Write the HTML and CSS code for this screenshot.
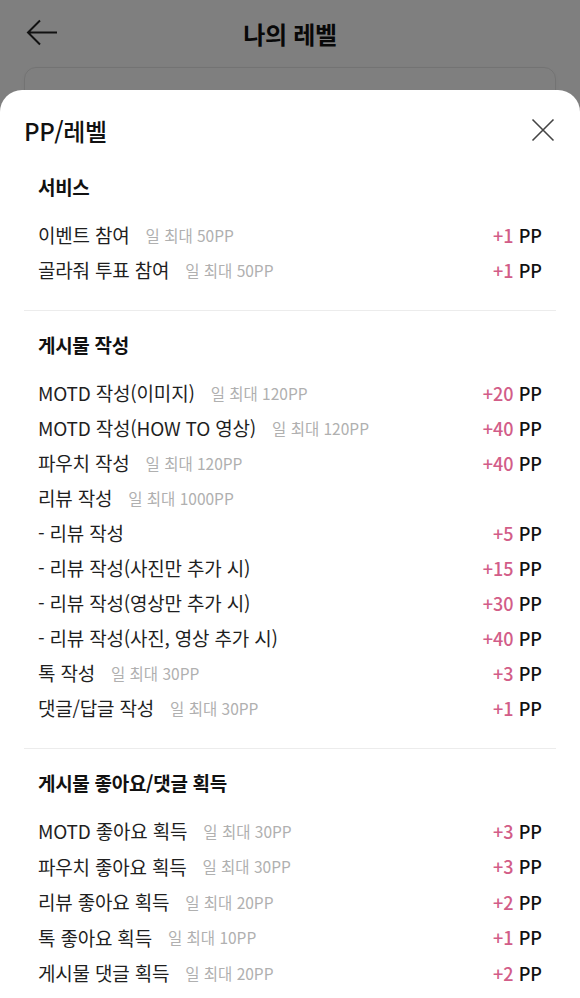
FILE: index.html
```html
<!DOCTYPE html>
<html lang="ko">

<head>
    <meta charset="UTF-8">
    <meta name="viewport" content="width=device-width, initial-scale=1.0">
    <title>나의 레벨</title>
    <link rel="stylesheet" href="styles.css">
</head>

<body>
    <div class="page">
        <header class="top-bar">
            <button class="back-btn" aria-label="뒤로">
                <svg width="32" height="28" viewBox="0 0 32 28">
                    <path d="M31 13.5H2M14 1.5L2 13.5L14 25.5" fill="none" stroke="#222" stroke-width="2" />
                </svg>
            </button>
            <h1>나의 레벨</h1>
        </header>
        <div class="level-card"></div>
    </div>

    <div class="dim"></div>

    <div class="sheet">
        <div class="sheet-head">
            <h2>PP/레벨</h2>
            <button class="close-btn" aria-label="닫기">
                <svg width="24" height="24" viewBox="0 0 24 24">
                    <path d="M1.5 1.5L22.5 22.5M22.5 1.5L1.5 22.5" fill="none" stroke="#444" stroke-width="1.6" />
                </svg>
            </button>
        </div>

        <section class="group">
            <h3>서비스</h3>
            <ul class="rules">
                <li><span class="name">이벤트 참여</span><span class="limit">일 최대 50PP</span><span class="point"><em>+1</em> PP</span></li>
                <li><span class="name">골라줘 투표 참여</span><span class="limit">일 최대 50PP</span><span class="point"><em>+1</em> PP</span></li>
            </ul>
        </section>

        <section class="group">
            <h3>게시물 작성</h3>
            <ul class="rules">
                <li><span class="name">MOTD 작성(이미지)</span><span class="limit">일 최대 120PP</span><span class="point"><em>+20</em> PP</span></li>
                <li><span class="name">MOTD 작성(HOW TO 영상)</span><span class="limit">일 최대 120PP</span><span class="point"><em>+40</em> PP</span></li>
                <li><span class="name">파우치 작성</span><span class="limit">일 최대 120PP</span><span class="point"><em>+40</em> PP</span></li>
                <li><span class="name">리뷰 작성</span><span class="limit">일 최대 1000PP</span></li>
                <li><span class="name">- 리뷰 작성</span><span class="point"><em>+5</em> PP</span></li>
                <li><span class="name">- 리뷰 작성(사진만 추가 시)</span><span class="point"><em>+15</em> PP</span></li>
                <li><span class="name">- 리뷰 작성(영상만 추가 시)</span><span class="point"><em>+30</em> PP</span></li>
                <li><span class="name">- 리뷰 작성(사진, 영상 추가 시)</span><span class="point"><em>+40</em> PP</span></li>
                <li><span class="name">톡 작성</span><span class="limit">일 최대 30PP</span><span class="point"><em>+3</em> PP</span></li>
                <li><span class="name">댓글/답글 작성</span><span class="limit">일 최대 30PP</span><span class="point"><em>+1</em> PP</span></li>
            </ul>
        </section>

        <section class="group wide">
            <h3>게시물 좋아요/댓글 획득</h3>
            <ul class="rules">
                <li><span class="name">MOTD 좋아요 획득</span><span class="limit">일 최대 30PP</span><span class="point"><em>+3</em> PP</span></li>
                <li><span class="name">파우치 좋아요 획득</span><span class="limit">일 최대 30PP</span><span class="point"><em>+3</em> PP</span></li>
                <li><span class="name">리뷰 좋아요 획득</span><span class="limit">일 최대 20PP</span><span class="point"><em>+2</em> PP</span></li>
                <li><span class="name">톡 좋아요 획득</span><span class="limit">일 최대 10PP</span><span class="point"><em>+1</em> PP</span></li>
                <li><span class="name">게시물 댓글 획득</span><span class="limit">일 최대 20PP</span><span class="point"><em>+2</em> PP</span></li>
            </ul>
        </section>
    </div>
</body>

</html>
```

FILE: styles.css
```css
body {
    margin: 0;
    font-family: "Noto Sans CJK KR", "Noto Sans", sans-serif;
    color: #111;
    background-color: #fff;
    height: 998px;
    overflow: hidden;
}

button {
    background: none;
    border: none;
    padding: 0;
    cursor: pointer;
}

.page {
    padding: 0 24px;
}

.top-bar {
    position: relative;
    height: 66px;
    display: flex;
    align-items: center;
    justify-content: center;
}

.back-btn {
    position: absolute;
    left: 2px;
    top: 19px;
    display: flex;
}

.top-bar h1 {
    margin: 0;
    font-size: 24px;
    font-weight: 700;
    letter-spacing: -0.3px;
}

.level-card {
    height: 200px;
    margin-top: 1px;
    border: 1px solid #e6e6e6;
    border-radius: 12px;
    box-shadow: 0 2px 6px rgba(0, 0, 0, 0.04);
}

.dim {
    position: absolute;
    inset: 0;
    background-color: rgba(0, 0, 0, 0.5);
}

.sheet {
    position: absolute;
    top: 90px;
    left: 0;
    right: 0;
    bottom: 0;
    padding: 25px 24px 0;
    background-color: #fff;
    border-radius: 22px 22px 0 0;
}

.sheet-head {
    display: flex;
    align-items: center;
    justify-content: space-between;
    height: 30px;
    margin-bottom: 30px;
}

.sheet-head h2 {
    margin: 0;
    font-size: 24px;
    font-weight: 500;
    letter-spacing: -0.4px;
}

.close-btn {
    display: flex;
    margin-right: 1px;
}

.group {
    padding: 0 14px 23px;
    border-bottom: 1px solid #ececec;
}

.group + .group {
    padding-top: 22px;
}

.group:last-child {
    border-bottom: none;
}

.group h3 {
    margin: 0 0 18px;
    font-size: 19px;
    line-height: 24px;
    font-weight: 700;
    letter-spacing: -0.3px;
}

.rules {
    list-style: none;
    margin: 0;
    padding: 0;
}

.rules li {
    display: flex;
    align-items: center;
    height: 35px;
}

.wide .rules li {
    height: 35.5px;
}

.name {
    font-size: 19px;
    letter-spacing: -0.2px;
    color: #1f1f1f;
}

.limit {
    margin-left: 16px;
    font-size: 15.5px;
    color: #b0b0b0;
}

.point {
    margin-left: auto;
    font-size: 18px;
    font-weight: 500;
    color: #111;
}

.point em {
    font-style: normal;
    color: #d25d88;
}
```
